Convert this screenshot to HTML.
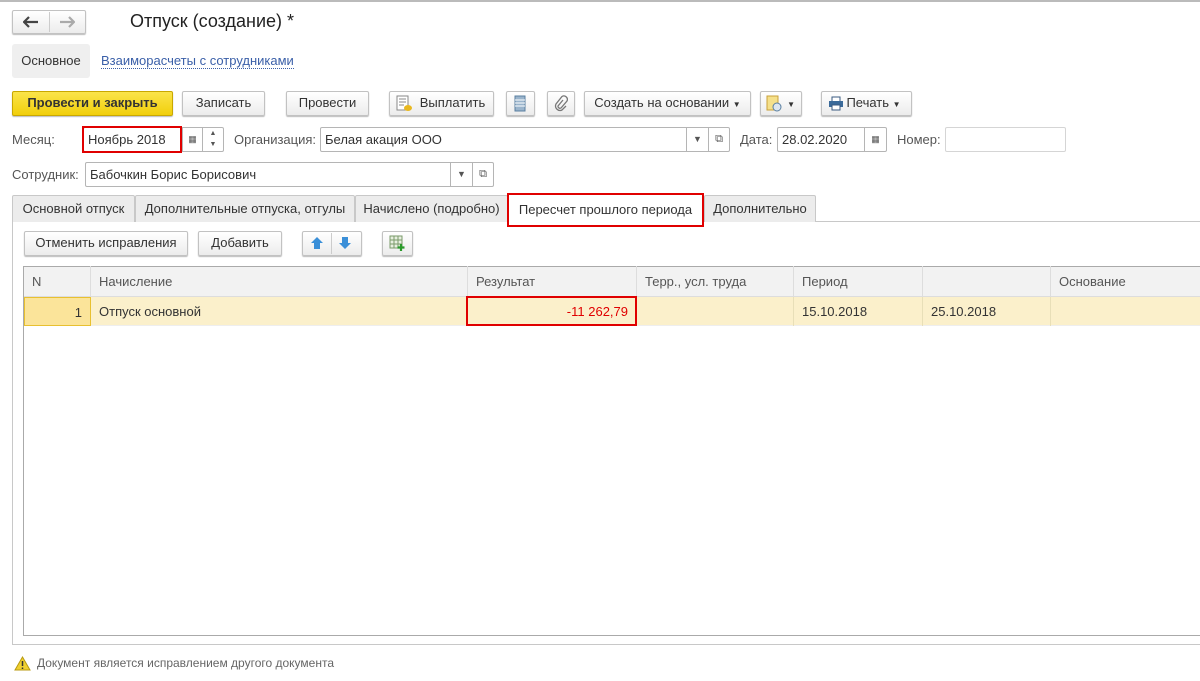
<!DOCTYPE html>
<html><head><meta charset="utf-8"><style>
*{box-sizing:border-box;margin:0;padding:0}
body{width:1200px;height:681px;background:#fff;font-family:"Liberation Sans",Arial,sans-serif;font-size:13px;color:#333;position:relative;overflow:hidden}
.a{position:absolute}
.btn{position:absolute;border:1px solid #c2c2c2;border-radius:2px;background:linear-gradient(#fff,#ececec);box-shadow:0 1px 1px #bbb;text-align:center;line-height:22px;color:#333;white-space:nowrap}
.fld{position:absolute;border:1px solid #b5b5b5;border-radius:2px;background:#fff;height:25px;line-height:23px;padding-left:4px;white-space:nowrap}
.lbl{position:absolute;color:#555;line-height:25px}
.sep{position:absolute;top:0;bottom:0;border-left:1px solid #b5b5b5;text-align:center;font-size:9px;color:#555}
.tab{position:absolute;top:195px;height:27px;border:1px solid #c8c8c8;border-bottom:none;background:#ececec;line-height:26px;text-align:center;border-radius:2px 2px 0 0}
.th{position:absolute;top:266px;height:31px;line-height:31px;padding-left:8px;border-right:1px solid #ddd;color:#555}
.td{position:absolute;top:297px;height:29px;line-height:29px;padding-left:8px;border-right:1px solid #e8dfb8}
</style></head><body>
<div class="a" style="left:0;top:0;width:1200px;height:2px;background:#bbb"></div>
<div class="btn" style="left:12px;top:10px;width:74px;height:24px"></div>
<div class="a" style="left:49px;top:12px;height:20px;border-left:1px solid #ccc"></div>
<svg class="a" style="left:23px;top:16px" width="16" height="12"><path d="M1 6h14M6 1L1 6l5 5" stroke="#444" stroke-width="2.2" fill="none"/></svg>
<svg class="a" style="left:59px;top:16px" width="16" height="12"><path d="M1 6h14M10 1l5 5-5 5" stroke="#aaa" stroke-width="2.2" fill="none"/></svg>
<div class="a" style="left:130px;top:11px;font-size:18px;color:#222">Отпуск (создание) *</div>
<div class="a" style="left:12px;top:44px;width:78px;height:34px;background:#efefef;border-radius:3px;line-height:34px;text-align:center;color:#333">Основное</div>
<div class="a" style="left:101px;top:53px;color:#3a5fa8;border-bottom:1px dotted #3a5fa8;line-height:15px">Взаиморасчеты с сотрудниками</div>

<div class="btn" style="left:12px;top:91px;width:161px;height:25px;background:linear-gradient(#fbe44a,#f1cf0b);border-color:#c9a800;font-weight:bold;color:#333">Провести и закрыть</div>
<div class="btn" style="left:182px;top:91px;width:83px;height:25px">Записать</div>
<div class="btn" style="left:286px;top:91px;width:83px;height:25px">Провести</div>
<div class="btn" style="left:389px;top:91px;width:105px;height:25px;padding-left:22px">Выплатить</div>
<svg class="a" style="left:396px;top:95px" width="16" height="17"><rect x="1" y="1" width="11" height="14" fill="#fff" stroke="#888"/><path d="M3 4h7M3 7h7M3 10h5" stroke="#888"/><ellipse cx="12" cy="13" rx="4" ry="3" fill="#e8b820"/></svg>
<div class="btn" style="left:506px;top:91px;width:29px;height:25px"></div>
<svg class="a" style="left:514px;top:95px" width="12" height="17"><rect x="1" y="1" width="10" height="15" fill="#9ab4cc" stroke="#5a7fa0"/><path d="M1 5h10M1 8h10M1 11h10" stroke="#fff"/></svg>
<div class="btn" style="left:547px;top:91px;width:28px;height:25px"></div>
<svg class="a" style="left:554px;top:95px" width="14" height="17"><path d="M9 5L4 11a2 2 0 0 0 3 2l6-7a3.5 3.5 0 0 0-5-4.5L2 9a4.5 4.5 0 0 0 6 6l4-4" stroke="#777" stroke-width="1.3" fill="none"/></svg>
<div class="btn" style="left:584px;top:91px;width:167px;height:25px">Создать на основании <span style="font-size:8px">▼</span></div>
<div class="btn" style="left:760px;top:91px;width:42px;height:25px;text-align:right;padding-right:6px"><span style="font-size:8px">▼</span></div>
<svg class="a" style="left:766px;top:95px" width="16" height="17"><rect x="1" y="1" width="11" height="14" fill="#f5e08a" stroke="#c9a13a"/><circle cx="11" cy="12" r="4" fill="#dde6f0" stroke="#5a7fa0"/></svg>
<div class="btn" style="left:821px;top:91px;width:91px;height:25px;padding-left:14px">Печать <span style="font-size:8px">▼</span></div>
<svg class="a" style="left:828px;top:96px" width="16" height="15"><rect x="4" y="1" width="8" height="5" fill="#fff" stroke="#3a5a80"/><rect x="1" y="5" width="14" height="6" fill="#3a6a9a"/><rect x="4" y="9" width="8" height="5" fill="#fff" stroke="#3a5a80"/></svg>

<div class="lbl" style="left:12px;top:127px">Месяц:</div>
<div class="fld" style="left:83px;top:127px;width:141px">Ноябрь 2018<div class="sep" style="left:98px;width:20px">▦</div><div class="sep" style="left:118px;width:21px;line-height:11px;font-size:7px">▲<br>▼</div></div>
<div class="a" style="left:82px;top:126px;width:100px;height:27px;border:2px solid #e00000"></div>
<div class="lbl" style="left:234px;top:127px">Организация:</div>
<div class="fld" style="left:320px;top:127px;width:410px">Белая акация ООО<div class="sep" style="left:365px;width:22px">▼</div><div class="sep" style="left:387px;width:21px;font-size:11px">⧉</div></div>
<div class="lbl" style="left:740px;top:127px">Дата:</div>
<div class="fld" style="left:777px;top:127px;width:110px">28.02.2020<div class="sep" style="left:86px;width:22px">▦</div></div>
<div class="lbl" style="left:897px;top:127px">Номер:</div>
<div class="fld" style="left:945px;top:127px;width:121px;border-color:#d5d5d5"></div>

<div class="lbl" style="left:12px;top:162px">Сотрудник:</div>
<div class="fld" style="left:85px;top:162px;width:409px">Бабочкин Борис Борисович<div class="sep" style="left:364px;width:22px">▼</div><div class="sep" style="left:386px;width:21px;font-size:11px">⧉</div></div>

<div class="a" style="left:12px;top:221px;width:1200px;height:424px;border:1px solid #c8c8c8"></div>
<div class="tab" style="left:12px;width:123px">Основной отпуск</div>
<div class="tab" style="left:135px;width:220px">Дополнительные отпуска, отгулы</div>
<div class="tab" style="left:355px;width:153px">Начислено (подробно)</div>
<div class="tab" style="left:507px;width:197px;background:#fff;border:2px solid #e00000;border-radius:0;line-height:30px;top:193px;height:34px">Пересчет прошлого периода</div>
<div class="tab" style="left:704px;width:112px">Дополнительно</div>

<div class="btn" style="left:24px;top:231px;width:164px;height:25px">Отменить исправления</div>
<div class="btn" style="left:198px;top:231px;width:84px;height:25px">Добавить</div>
<div class="btn" style="left:302px;top:231px;width:60px;height:25px"></div>
<div class="a" style="left:331px;top:233px;height:21px;border-left:1px solid #ccc"></div>
<svg class="a" style="left:310px;top:236px" width="14" height="14"><path d="M7 1L1 7h3v6h6V7h3z" fill="#3a8fd8"/></svg>
<svg class="a" style="left:338px;top:236px" width="14" height="14"><path d="M7 13L1 7h3V1h6v6h3z" fill="#3a8fd8"/></svg>
<div class="btn" style="left:382px;top:231px;width:31px;height:25px"></div>
<svg class="a" style="left:389px;top:235px" width="17" height="17"><rect x="1" y="1" width="12" height="12" fill="#e8f0e0" stroke="#7a9a6a"/><path d="M1 5h12M1 9h12M5 1v12M9 1v12" stroke="#7a9a6a"/><path d="M12 9v7M8.5 12.5h7" stroke="#2a9a2a" stroke-width="2.2"/></svg>

<div class="a" style="left:23px;top:266px;width:1180px;height:370px;border:1px solid #aaa"></div>
<div class="a" style="left:24px;top:267px;width:1176px;height:30px;background:#f2f2f2;border-bottom:1px solid #ddd"></div>
<div class="th" style="left:24px;width:67px">N</div>
<div class="th" style="left:91px;width:377px">Начисление</div>
<div class="th" style="left:468px;width:169px">Результат</div>
<div class="th" style="left:637px;width:157px">Терр., усл. труда</div>
<div class="th" style="left:794px;width:129px">Период</div>
<div class="th" style="left:923px;width:128px"></div>
<div class="th" style="left:1051px;width:149px;border:none">Основание</div>
<div class="a" style="left:24px;top:297px;width:1176px;height:29px;background:#fbf0cb;border-bottom:1px solid #eee"></div>
<div class="td" style="left:24px;width:67px;background:#fbe49a;border:1px solid #e8c030;text-align:right;padding-right:8px">1</div>
<div class="td" style="left:91px;width:377px">Отпуск основной</div>
<div class="td" style="left:468px;width:169px;color:#e00000;text-align:right;padding-right:8px">-11 262,79</div>
<div class="a" style="left:466px;top:296px;width:171px;height:30px;border:2px solid #e00000"></div>
<div class="td" style="left:637px;width:157px"></div>
<div class="td" style="left:794px;width:129px">15.10.2018</div>
<div class="td" style="left:923px;width:128px">25.10.2018</div>

<svg class="a" style="left:14px;top:656px" width="17" height="15"><path d="M8.5 1L16 14H1z" fill="#f0d030" stroke="#b89a10"/><path d="M8.5 5v5M8.5 11.5v1.5" stroke="#333" stroke-width="1.5"/></svg>
<div class="a" style="left:37px;top:656px;color:#666;font-size:12px">Документ является исправлением другого документа</div>
</body></html>
